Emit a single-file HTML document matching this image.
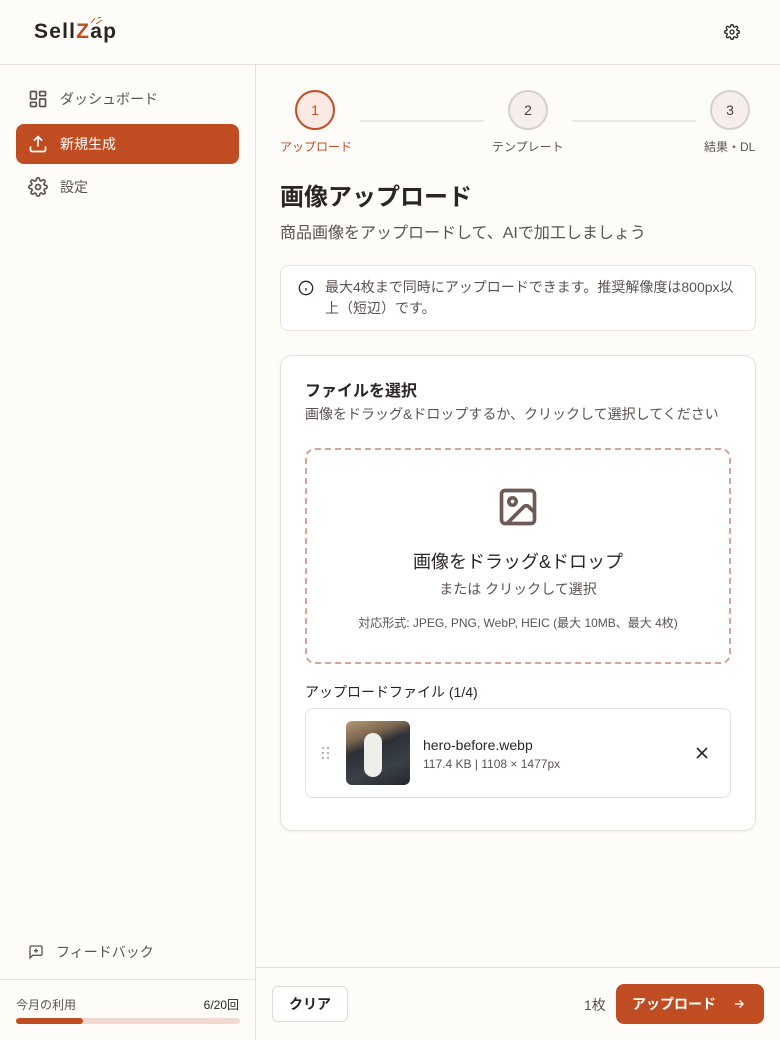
<!DOCTYPE html>
<html><head><meta charset="utf-8"><style>
*{box-sizing:border-box;margin:0;padding:0}
body{width:780px;height:1040px;background:#fdfcf9;font-family:"Liberation Sans","Noto Sans CJK JP",sans-serif;color:#2b2624;position:relative;overflow:hidden}
.abs{position:absolute}
.hdr{left:0;top:0;width:780px;height:65px;border-bottom:1px solid #e6e1dc}
.side{left:0;top:65px;width:256px;height:975px;border-right:1px solid #e6e1dc}
.nav{position:absolute;left:16px;width:223px;height:40px;border-radius:8px;display:flex;align-items:center;padding-left:12px;font-size:14px;color:#5b5350}
.nav svg{margin-right:12px}
.act{background:#c04d22;color:#fff}
.step{width:40px;height:40px;border-radius:50%;border:2px solid #d6d0cc;background:#f5eeec;display:flex;align-items:center;justify-content:center;font-size:14px;color:#4a4340}
.lbl{font-size:12px;color:#5b5350}
.line{height:2px;background:#ede8e4}
</style></head><body>
<div class="abs hdr">
 <div class="abs" style="left:34px;top:20px;font-size:21px;font-weight:bold;letter-spacing:1.2px;color:#2b2624">Sell<span style="color:#c04d22">Z</span>ap</div>
 <svg class="abs" style="left:89px;top:17px" width="14" height="8"><path d="M2 6 L6 1 M7 7 L13 3 M9 1 L12 0" stroke="#c04d22" stroke-width="1"/></svg>
 <svg class="abs" style="left:724px;top:24px" width="16" height="16" viewBox="0 0 24 24" fill="none" stroke="#2b2624" stroke-width="2"><circle cx="12" cy="12" r="3"/><path d="M19.4 15a1.7 1.7 0 0 0 .3 1.8l.1.1a2 2 0 1 1-2.8 2.8l-.1-.1a1.7 1.7 0 0 0-2.8 1.2V21a2 2 0 1 1-4 0v-.1a1.7 1.7 0 0 0-2.8-1.2l-.1.1a2 2 0 1 1-2.8-2.8l.1-.1A1.7 1.7 0 0 0 3.3 14H3a2 2 0 1 1 0-4h.1a1.7 1.7 0 0 0 1.2-2.8l-.1-.1a2 2 0 1 1 2.8-2.8l.1.1A1.7 1.7 0 0 0 10 3.1V3a2 2 0 1 1 4 0v.1a1.7 1.7 0 0 0 2.8 1.2l.1-.1a2 2 0 1 1 2.8 2.8l-.1.1A1.7 1.7 0 0 0 20.9 10H21a2 2 0 1 1 0 4h-.1a1.7 1.7 0 0 0-1.5 1z"/></svg>
</div>
<div class="abs side">
 <div class="nav" style="top:14px"><svg width="20" height="20" viewBox="0 0 24 24" fill="none" stroke="#5b5350" stroke-width="2"><rect x="3" y="3" width="7" height="9" rx="1"/><rect x="14" y="3" width="7" height="5" rx="1"/><rect x="14" y="12" width="7" height="9" rx="1"/><rect x="3" y="16" width="7" height="5" rx="1"/></svg>ダッシュボード</div>
 <div class="nav act" style="top:59px"><svg width="20" height="20" viewBox="0 0 24 24" fill="none" stroke="#fff" stroke-width="2"><path d="M21 15v4a2 2 0 0 1-2 2H5a2 2 0 0 1-2-2v-4M17 8l-5-5-5 5M12 3v12"/></svg>新規生成</div>
 <div class="nav" style="top:102px"><svg width="20" height="20" viewBox="0 0 24 24" fill="none" stroke="#5b5350" stroke-width="2"><circle cx="12" cy="12" r="3"/><path d="M19.4 15a1.7 1.7 0 0 0 .3 1.8l.1.1a2 2 0 1 1-2.8 2.8l-.1-.1a1.7 1.7 0 0 0-2.8 1.2V21a2 2 0 1 1-4 0v-.1a1.7 1.7 0 0 0-2.8-1.2l-.1.1a2 2 0 1 1-2.8-2.8l.1-.1A1.7 1.7 0 0 0 3.3 14H3a2 2 0 1 1 0-4h.1a1.7 1.7 0 0 0 1.2-2.8l-.1-.1a2 2 0 1 1 2.8-2.8l.1.1A1.7 1.7 0 0 0 10 3.1V3a2 2 0 1 1 4 0v.1a1.7 1.7 0 0 0 2.8 1.2l.1-.1a2 2 0 1 1 2.8 2.8l-.1.1A1.7 1.7 0 0 0 20.9 10H21a2 2 0 1 1 0 4h-.1a1.7 1.7 0 0 0-1.5 1z"/></svg>設定</div>
 <div class="abs" style="left:28px;top:877px;font-size:14px;color:#5b5350;display:flex;align-items:center"><svg width="16" height="16" viewBox="0 0 24 24" fill="none" stroke="#5b5350" stroke-width="2" style="margin-right:12px"><path d="M21 15a2 2 0 0 1-2 2H7l-4 4V5a2 2 0 0 1 2-2h14a2 2 0 0 1 2 2z"/><path d="M12 7v6M9 10h6"/></svg>フィードバック</div>
 <div class="abs" style="left:0;top:914px;width:255px;border-top:1px solid #e6e1dc"></div>
 <div class="abs" style="left:16px;top:931px;font-size:12px;color:#5b5350">今月の利用</div>
 <div class="abs" style="right:16px;top:931px;font-size:12px;color:#2b2624">6/20回</div>
 <div class="abs" style="left:16px;top:953px;width:224px;height:6px;border-radius:3px;background:#f2d9cf"><div style="width:67px;height:6px;border-radius:3px;background:#c04d22"></div></div>
</div>
<div class="abs step" style="left:295px;top:90px;border-color:#c04d22;background:#faeae3;color:#c04d22">1</div>
<div class="abs step" style="left:508px;top:90px">2</div>
<div class="abs step" style="left:710px;top:90px">3</div>
<div class="abs line" style="left:360px;top:120px;width:124px"></div>
<div class="abs line" style="left:572px;top:120px;width:124px"></div>
<div class="abs lbl" style="left:280px;top:138px;color:#c04d22">アップロード</div>
<div class="abs lbl" style="left:492px;top:138px">テンプレート</div>
<div class="abs lbl" style="left:704px;top:138px">結果・DL</div>
<div class="abs" style="left:280px;top:177px;font-size:24px;font-weight:bold">画像アップロード</div>
<div class="abs" style="left:280px;top:219px;font-size:16px;color:#5b5350">商品画像をアップロードして、AIで加工しましょう</div>
<div class="abs" style="left:280px;top:265px;width:476px;height:66px;border:1px solid #e6e1dc;border-radius:8px;background:#fff"></div>
<svg class="abs" style="left:298px;top:280px" width="16" height="16" viewBox="0 0 24 24" fill="none" stroke="#2b2624" stroke-width="2"><circle cx="12" cy="12" r="10"/><path d="M12 16v-4M12 8h.01"/></svg>
<div class="abs" style="left:325px;top:277px;width:420px;font-size:14px;line-height:21px;color:#5b5350">最大4枚まで同時にアップロードできます。推奨解像度は800px以上（短辺）です。</div>
<div class="abs" style="left:280px;top:355px;width:476px;height:476px;border:1px solid #e6e1dc;border-radius:12px;background:#fff;box-shadow:0 1px 3px rgba(0,0,0,.06)"></div>
<div class="abs" style="left:305px;top:377px;font-size:16px;font-weight:bold">ファイルを選択</div>
<div class="abs" style="left:305px;top:404px;font-size:14px;color:#5b5350">画像をドラッグ&amp;ドロップするか、クリックして選択してください</div>
<div class="abs" style="left:305px;top:448px;width:426px;height:216px;border:2px dashed #d2a595;border-radius:10px"></div>
<svg class="abs" style="left:496px;top:485px" width="44" height="44" viewBox="0 0 24 24" fill="none" stroke="#6e5a55" stroke-width="2"><rect x="3" y="3" width="18" height="18" rx="2"/><circle cx="9" cy="9" r="2"/><path d="M21 15l-3.1-3.1a2 2 0 0 0-2.8 0L6 21"/></svg>
<div class="abs" style="left:305px;top:548px;width:426px;text-align:center;font-size:18px;color:#2b2624">画像をドラッグ&amp;ドロップ</div>
<div class="abs" style="left:305px;top:579px;width:426px;text-align:center;font-size:14px;color:#5b5350">または クリックして選択</div>
<div class="abs" style="left:305px;top:614px;width:426px;text-align:center;font-size:12px;color:#5b5350">対応形式: JPEG, PNG, WebP, HEIC (最大 10MB、最大 4枚)</div>
<div class="abs" style="left:305px;top:682px;font-size:14px;color:#2b2624">アップロードファイル (1/4)</div>
<div class="abs" style="left:305px;top:708px;width:426px;height:90px;border:1px solid #e6e1dc;border-radius:8px;background:#fff"></div>
<svg class="abs" style="left:321px;top:746px" width="9" height="14"><g fill="#b8b0ac"><circle cx="2" cy="2" r="1.2"/><circle cx="7" cy="2" r="1.2"/><circle cx="2" cy="7" r="1.2"/><circle cx="7" cy="7" r="1.2"/><circle cx="2" cy="12" r="1.2"/><circle cx="7" cy="12" r="1.2"/></g></svg>
<div class="abs" style="left:346px;top:721px;width:64px;height:64px;border-radius:6px;overflow:hidden;background:linear-gradient(160deg,#b89a72 0%,#7a6650 25%,#2d3136 40%,#3a4048 70%,#24282c 100%)"><div style="position:absolute;left:18px;top:12px;width:18px;height:44px;border-radius:9px;background:#eeeeea"></div></div>
<div class="abs" style="left:423px;top:737px;font-size:14px;color:#2b2624">hero-before.webp</div>
<div class="abs" style="left:423px;top:757px;font-size:12px;color:#5b5350">117.4 KB | 1108 × 1477px</div>
<svg class="abs" style="left:696px;top:747px" width="12" height="12"><path d="M1 1L11 11M11 1L1 11" stroke="#2b2624" stroke-width="1.6"/></svg>
<div class="abs" style="left:256px;top:967px;width:524px;border-top:1px solid #e6e1dc"></div>
<div class="abs" style="left:272px;top:986px;width:76px;height:36px;border:1px solid #e0dad6;border-radius:6px;background:#fff;display:flex;align-items:center;justify-content:center;font-size:14px;font-weight:bold">クリア</div>
<div class="abs" style="left:584px;top:995px;font-size:14px;color:#5b5350">1枚</div>
<div class="abs" style="left:616px;top:984px;width:148px;height:40px;border-radius:8px;background:#c04d22;color:#fff;font-size:14px;font-weight:bold;display:flex;align-items:center;padding-left:16px">アップロード<svg style="margin-left:16px" width="14" height="14" viewBox="0 0 24 24" fill="none" stroke="#fff" stroke-width="2.2"><path d="M5 12h14M13 6l6 6-6 6"/></svg></div>
</body></html>
